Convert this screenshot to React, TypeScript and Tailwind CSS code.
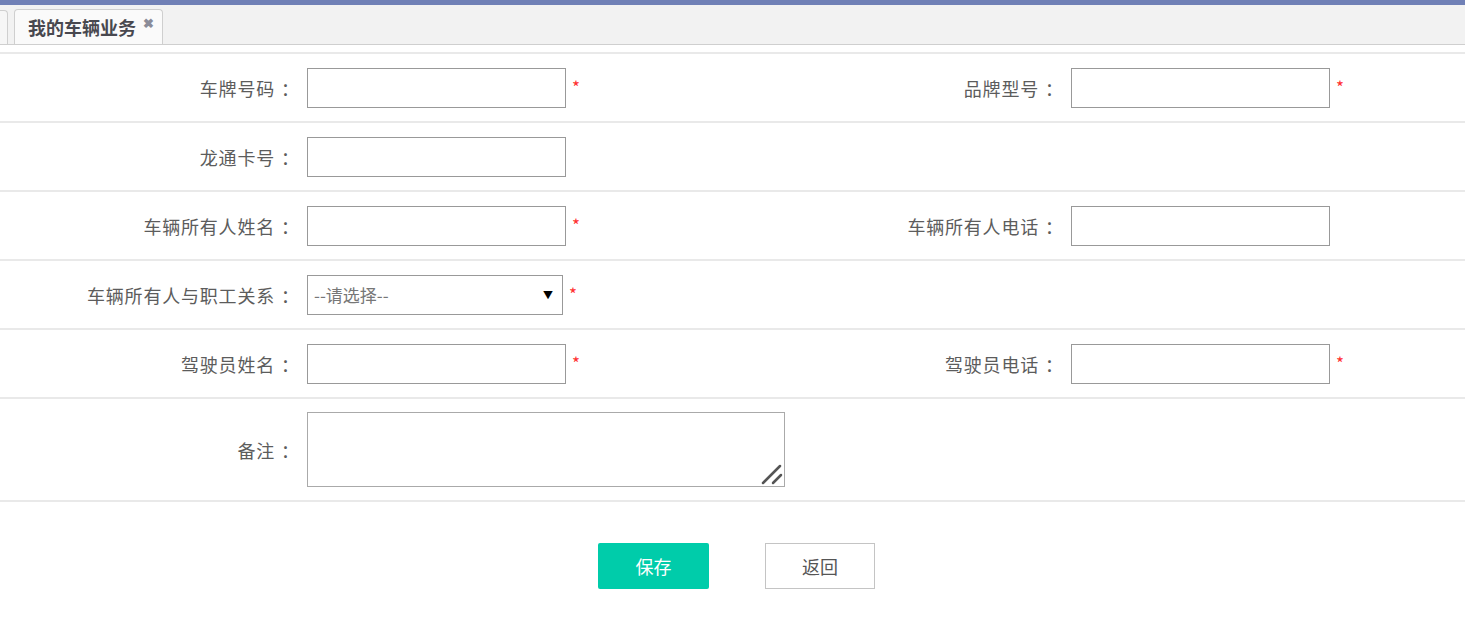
import React from "react";

const font = { fontFamily: '"Noto Sans CJK SC", "Noto Sans", sans-serif' };

function Star() {
  return <span className="ml-[6px] -mt-[2px] text-[17px] leading-none text-[#ff3030]">*</span>;
}

function Label({ children }: { children: React.ReactNode }) {
  return (
    <div className="flex items-center justify-end pr-[8px] text-[18px] leading-none text-[#5c5c5c]">
      <span className="tracking-[0.8px]">{children}</span>
      <span className="ml-[6px]">：</span>
    </div>
  );
}

function TextInput({ required }: { required?: boolean }) {
  return (
    <div className="flex items-center">
      <input
        type="text"
        className="h-[40px] w-[259px] border border-[#999] bg-white outline-none"
      />
      {required && <Star />}
    </div>
  );
}

function Row({ children, className = "" }: { children: React.ReactNode; className?: string }) {
  return (
    <div
      className={
        "grid grid-cols-[307px_457px_307px_1fr] items-center border-b-2 border-[#e9e9e9] " +
        className
      }
    >
      {children}
    </div>
  );
}

export default function App() {
  return (
    <div className="min-h-screen w-full bg-white" style={font}>
      {/* header strip + tabs */}
      <div className="h-[5px] bg-[#7080b6]" />
      <div className="flex h-[40px] items-end gap-[6px] border-b border-[#cfcfcf] bg-[#f2f2f2]">
        <div className="h-[34px] w-[8px] rounded-tr-[4px] border-r border-t border-[#cfcfcf] bg-[#f6f6f6]" />
        <div className="flex h-[35px] items-center rounded-t-[4px] border-l border-r border-t border-[#cfcfcf] bg-[#fafafa] pl-[13px] pr-[8px]">
          <span className="text-[18px] font-bold text-[#48484f]">我的车辆业务</span>
          <span className="ml-[7px] -mt-[10px] text-[13px] font-bold leading-none text-[#8a8c99]">✖</span>
        </div>
      </div>

      {/* form */}
      <div className="mt-[7px] border-t-2 border-[#e9e9e9]">
        <Row className="h-[69px]">
          <Label>车牌号码</Label>
          <TextInput required />
          <Label>品牌型号</Label>
          <TextInput required />
        </Row>
        <Row className="h-[69px]">
          <Label>龙通卡号</Label>
          <TextInput />
          <div />
          <div />
        </Row>
        <Row className="h-[69px]">
          <Label>车辆所有人姓名</Label>
          <TextInput required />
          <Label>车辆所有人电话</Label>
          <TextInput />
        </Row>
        <Row className="h-[69px]">
          <Label>车辆所有人与职工关系</Label>
          <div className="flex items-center">
            <div className="flex h-[40px] w-[256px] items-center justify-between border border-[#999] bg-white pl-[6px] pr-[9px]">
              <span className="text-[17px] text-[#777]">--请选择--</span>
              <span className="text-[10px] text-black">▼</span>
            </div>
            <Star />
          </div>
          <div />
          <div />
        </Row>
        <Row className="h-[69px]">
          <Label>驾驶员姓名</Label>
          <TextInput required />
          <Label>驾驶员电话</Label>
          <TextInput required />
        </Row>
        <Row className="py-[13px]">
          <Label>备注</Label>
          <div className="relative h-[75px] w-[478px]">
            <textarea className="h-full w-full resize-none border border-[#aaa] bg-white outline-none" />
            <svg
              className="pointer-events-none absolute bottom-[2px] right-[2px]"
              width="22"
              height="22"
              viewBox="0 0 22 22"
            >
              <line x1="2" y1="20" x2="19" y2="3" stroke="#555" strokeWidth="2.5" strokeLinecap="round" />
              <line x1="12" y1="20" x2="20" y2="12" stroke="#555" strokeWidth="2.5" strokeLinecap="round" />
            </svg>
          </div>
          <div />
          <div />
        </Row>
      </div>

      {/* actions */}
      <div className="mt-[41px] flex justify-center gap-[56px] pl-[8px]">
        <button className="h-[46px] w-[111px] rounded-[2px] bg-[#00ccaa] text-[18px] text-white">
          保存
        </button>
        <button className="h-[46px] w-[110px] border border-[#c4c4c4] bg-white text-[18px] text-[#555]">
          返回
        </button>
      </div>
    </div>
  );
}
